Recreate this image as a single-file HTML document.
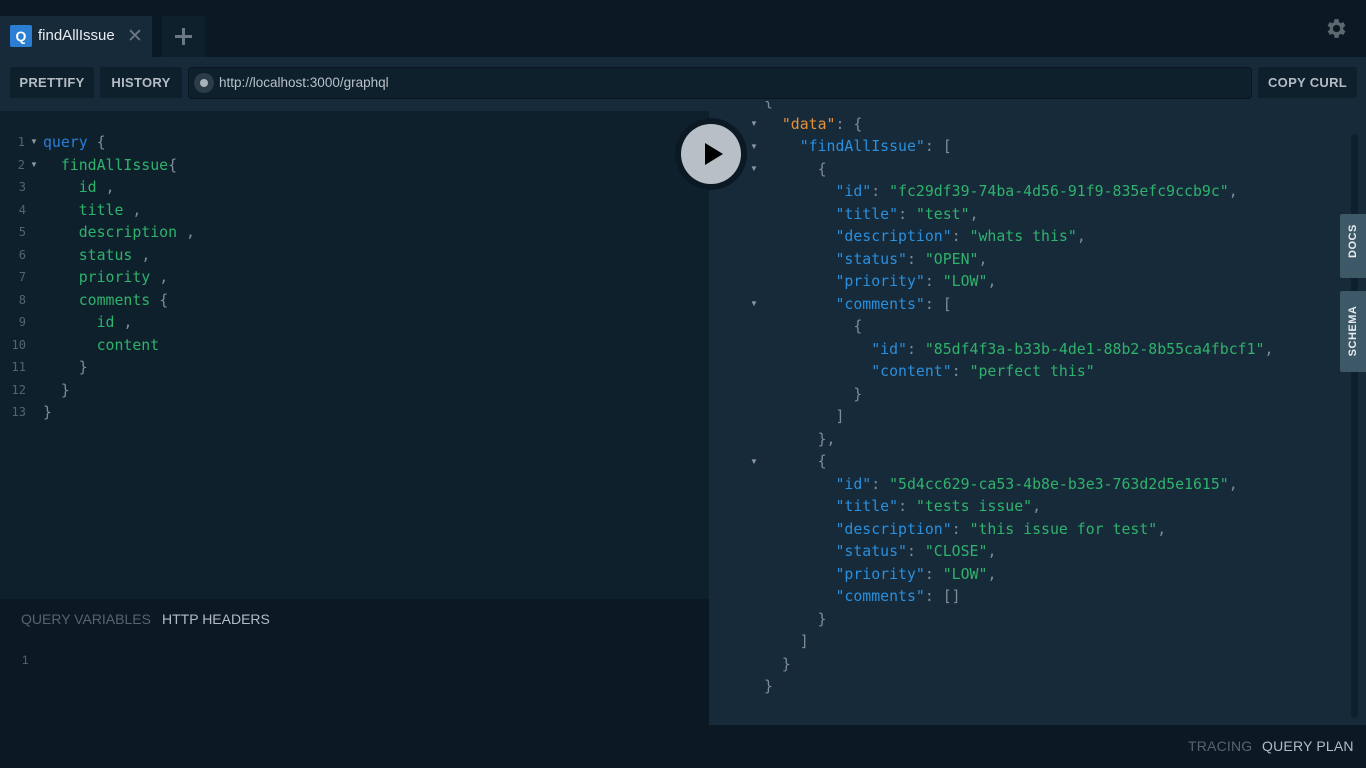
<!DOCTYPE html>
<html><head><meta charset="utf-8"><style>
*{margin:0;padding:0;box-sizing:border-box}
body{width:1366px;height:768px;overflow:hidden;background:#0b1924;font-family:"Liberation Sans",sans-serif;position:relative}
.abs{position:absolute}
.btn{position:absolute;top:67px;height:31px;background:#0f202d;border-radius:2px;color:#b4bcc3;font-size:13px;font-weight:bold;letter-spacing:.3px;line-height:31px;text-align:center}
.code{font-family:"DejaVu Sans Mono","Liberation Mono",monospace;font-size:14.85px;white-space:pre;position:absolute;line-height:22.5px}
.ln{position:absolute;left:0;width:26px;text-align:right;color:#55636f;font-family:"DejaVu Sans Mono",monospace;font-size:12px;line-height:22.5px}
.ar{position:absolute;color:#8b97a1;font-size:8px;line-height:22.5px}
.k{color:#2a8fdc}.s{color:#2fb26b}.p{color:#7e8c98}.g{color:#2fb26b}.o{color:#e69138}.q{color:#2a7ed3}
</style></head><body>
<!-- tabs -->
<div class="abs" style="left:0;top:16px;width:152px;height:41px;background:#172a3a"></div>
<div class="abs" style="left:10px;top:25px;width:22px;height:22px;background:#2a7ed3;border-radius:2px;color:#fff;font-weight:bold;font-size:14px;text-align:center;line-height:22px">Q</div>
<div class="abs" style="left:38px;top:27px;color:#e8ecef;font-size:15px">findAllIssue</div>
<div class="abs" style="left:127px;top:25px;color:#6b7883;font-size:19px">✕</div>
<div class="abs" style="left:162px;top:16px;width:43px;height:41px;background:#0f202d"></div>
<div class="abs" style="left:175px;top:35px;width:17px;height:3px;background:#6b7883"></div>
<div class="abs" style="left:182px;top:28px;width:3px;height:17px;background:#6b7883"></div>
<svg class="abs" style="left:1323px;top:16px" width="25" height="25" viewBox="0 0 24 24"><path fill="#5c6870" d="M19.4 13a7.5 7.5 0 000-2l2.1-1.6-2-3.5-2.5 1a7.4 7.4 0 00-1.7-1L15 3h-4l-.4 2.9a7.4 7.4 0 00-1.7 1l-2.5-1-2 3.5L6.6 11a7.5 7.5 0 000 2l-2.1 1.6 2 3.5 2.5-1a7.4 7.4 0 001.7 1L11 21h4l.4-2.9a7.4 7.4 0 001.7-1l2.5 1 2-3.5zM13 15.5a3.5 3.5 0 110-7 3.5 3.5 0 010 7z"/></svg>
<!-- toolbar -->
<div class="abs" style="left:0;top:57px;width:1366px;height:54px;background:#172a3a"></div>
<div class="btn" style="left:10px;width:84px">PRETTIFY</div>
<div class="btn" style="left:100px;width:82px">HISTORY</div>
<div class="abs" style="left:188px;top:67px;width:1064px;height:32px;background:#0f202d;border:1px solid #0a1520;border-radius:4px"></div>
<div class="abs" style="left:194px;top:73px;width:20px;height:20px;border-radius:50%;background:#2c3c48"></div>
<div class="abs" style="left:200px;top:79px;width:8px;height:8px;border-radius:50%;background:#aab3bb"></div>
<div class="abs" style="left:219px;top:75px;color:#b8c0c7;font-size:13.5px">http://localhost:3000/graphql</div>
<div class="btn" style="left:1258px;width:99px">COPY CURL</div>
<!-- left editor -->
<div class="abs" style="left:0;top:111px;width:709px;height:488px;background:#0f202d"></div>
<div class="abs" style="left:0;top:131px;width:30px">
<div class="ln" style="top:0;width:25px">1</div><div class="ln" style="top:22.5px;width:25px">2</div><div class="ln" style="top:45px">3</div><div class="ln" style="top:67.5px">4</div><div class="ln" style="top:90px">5</div><div class="ln" style="top:112.5px">6</div><div class="ln" style="top:135px">7</div><div class="ln" style="top:157.5px">8</div><div class="ln" style="top:180px">9</div><div class="ln" style="top:202.5px">10</div><div class="ln" style="top:225px">11</div><div class="ln" style="top:247.5px">12</div><div class="ln" style="top:270px">13</div>
<div class="ar" style="left:30px;top:0">▼</div><div class="ar" style="left:30px;top:22.5px">▼</div>
</div>
<div class="code" style="left:43px;top:131px"><span class="q">query</span> <span class="p">{</span>
  <span class="g">findAllIssue</span><span class="p">{</span>
    <span class="g">id</span> <span class="p">,</span>
    <span class="g">title</span> <span class="p">,</span>
    <span class="g">description</span> <span class="p">,</span>
    <span class="g">status</span> <span class="p">,</span>
    <span class="g">priority</span> <span class="p">,</span>
    <span class="g">comments</span> <span class="p">{</span>
      <span class="g">id</span> <span class="p">,</span>
      <span class="g">content</span>
    <span class="p">}</span>
  <span class="p">}</span>
<span class="p">}</span></div>
<!-- variables -->
<div class="abs" style="left:21px;top:611px;color:#56646f;font-size:14px">QUERY VARIABLES</div>
<div class="abs" style="left:162px;top:611px;color:#b4bcc3;font-size:14px">HTTP HEADERS</div>
<div class="abs" style="left:22px;top:653px;color:#55636f;font-size:12px">1</div>
<!-- result -->
<div class="abs" style="left:709px;top:111px;width:657px;height:614px;background:#172a3a"></div>
<div class="abs" style="left:709px;top:101px;width:657px;height:624px;overflow:hidden">
<div class="abs" style="left:41px;top:12px">
<div class="ar" style="top:0">▼</div><div class="ar" style="top:22.5px">▼</div><div class="ar" style="top:45px">▼</div><div class="ar" style="top:180px">▼</div><div class="ar" style="top:337.5px">▼</div>
</div>
<div class="code" style="left:55px;top:-11px"><span class="p">{</span>
  <span class="o">"data"</span><span class="p">: {</span>
    <span class="k">"findAllIssue"</span><span class="p">: [</span>
      <span class="p">{</span>
        <span class="k">"id"</span><span class="p">: </span><span class="s">"fc29df39-74ba-4d56-91f9-835efc9ccb9c"</span><span class="p">,</span>
        <span class="k">"title"</span><span class="p">: </span><span class="s">"test"</span><span class="p">,</span>
        <span class="k">"description"</span><span class="p">: </span><span class="s">"whats this"</span><span class="p">,</span>
        <span class="k">"status"</span><span class="p">: </span><span class="s">"OPEN"</span><span class="p">,</span>
        <span class="k">"priority"</span><span class="p">: </span><span class="s">"LOW"</span><span class="p">,</span>
        <span class="k">"comments"</span><span class="p">: [</span>
          <span class="p">{</span>
            <span class="k">"id"</span><span class="p">: </span><span class="s">"85df4f3a-b33b-4de1-88b2-8b55ca4fbcf1"</span><span class="p">,</span>
            <span class="k">"content"</span><span class="p">: </span><span class="s">"perfect this"</span>
          <span class="p">}</span>
        <span class="p">]</span>
      <span class="p">},</span>
      <span class="p">{</span>
        <span class="k">"id"</span><span class="p">: </span><span class="s">"5d4cc629-ca53-4b8e-b3e3-763d2d5e1615"</span><span class="p">,</span>
        <span class="k">"title"</span><span class="p">: </span><span class="s">"tests issue"</span><span class="p">,</span>
        <span class="k">"description"</span><span class="p">: </span><span class="s">"this issue for test"</span><span class="p">,</span>
        <span class="k">"status"</span><span class="p">: </span><span class="s">"CLOSE"</span><span class="p">,</span>
        <span class="k">"priority"</span><span class="p">: </span><span class="s">"LOW"</span><span class="p">,</span>
        <span class="k">"comments"</span><span class="p">: []</span>
      <span class="p">}</span>
    <span class="p">]</span>
  <span class="p">}</span>
<span class="p">}</span></div>
</div>
<div class="abs" style="left:1351px;top:134px;width:7px;height:584px;background:#0f202d;border-radius:3px"></div>
<div class="abs" style="left:1340px;top:214px;width:26px;height:64px;background:#3d5866;border-radius:2px 0 0 2px"></div>
<div class="abs" style="left:1340px;top:291px;width:26px;height:81px;background:#3d5866;border-radius:2px 0 0 2px"></div>
<div class="abs" style="left:1341px;top:246px;transform:translate(0,-50%) rotate(-90deg);width:24px;text-align:center;color:#e8ecef;font-size:11px;font-weight:bold;letter-spacing:.5px;white-space:nowrap">DOCS</div>
<div class="abs" style="left:1341px;top:331px;transform:translate(0,-50%) rotate(-90deg);width:24px;text-align:center;color:#e8ecef;font-size:11px;font-weight:bold;letter-spacing:.5px;white-space:nowrap;display:flex;justify-content:center">SCHEMA</div>
<!-- play -->
<div class="abs" style="left:675px;top:118px;width:72px;height:72px;border-radius:50%;background:#0b1924"></div>
<div class="abs" style="left:681px;top:124px;width:60px;height:60px;border-radius:50%;background:#b9bfc6"></div>
<div class="abs" style="left:705px;top:143px;width:0;height:0;border-top:11px solid transparent;border-bottom:11px solid transparent;border-left:18px solid #000"></div>
<!-- bottom -->
<div class="abs" style="left:1188px;top:738px;color:#56646f;font-size:14px;letter-spacing:.2px">TRACING</div>
<div class="abs" style="left:1262px;top:738px;color:#b4bcc3;font-size:14px;letter-spacing:.2px">QUERY PLAN</div>
</body></html>
